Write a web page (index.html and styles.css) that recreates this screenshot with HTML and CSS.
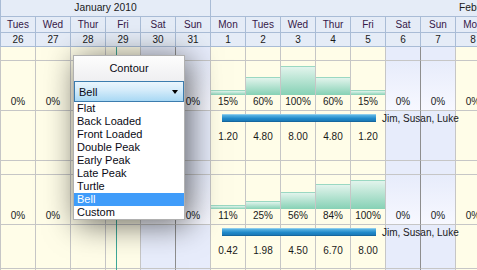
FILE: index.html
```html
<!DOCTYPE html>
<html lang="en">
<head>
<meta charset="UTF-8">
<title>Resource Schedule</title>
<link rel="stylesheet" href="styles.css">
</head>
<body>

<div class="sched">
    <div class="months">
        <div class="month jan">January 2010</div>
        <div class="month feb">February 2010</div>
    </div>
    <div class="row days" id="days"></div>
    <div class="row dates" id="dates"></div>
    <div id="groups">
        <!-- resource rows go here -->
    </div>

    <div class="today-line"></div>

    <div class="contour">
        <div class="contour-title">Contour</div>
        <div class="contour-select"><span>Bell</span><i class="arrow"></i></div>
        <ul class="contour-list" id="contour-list"></ul>
    </div>
</div>

<script>
    const columns = [
        ["Tues", 26], ["Wed", 27], ["Thur", 28], ["Fri", 29], ["Sat", 30], ["Sun", 31],
        ["Mon", 1], ["Tues", 2], ["Wed", 3], ["Thur", 4], ["Fri", 5], ["Sat", 6], ["Sun", 7], ["Mon", 8]
    ];

    const groups = [
        {
            pct: [0, 0, 0, 0, 0, 0, 15, 60, 100, 60, 15, 0, 0, 0],
            vals: ["", "", "", "", "", "", "1.20", "4.80", "8.00", "4.80", "1.20", "", "", ""],
            last: false
        },
        {
            pct: [0, 0, 0, 0, 0, 0, 11, 25, 56, 84, 100, 0, 0, 0],
            vals: ["", "", "", "", "", "", "0.42", "1.98", "4.50", "6.70", "8.00", "", "", ""],
            last: true
        }
    ];

    const contours = ["Flat", "Back Loaded", "Front Loaded", "Double Peak", "Early Peak", "Late Peak", "Turtle", "Bell", "Custom"];

    // columns hidden under the popup
    const covered = [2, 3, 4];

    // weekend class for a column
    function dayClass(name) {
        if (name === "Sat") return " sat";
        if (name === "Sun") return " sun";
        return "";
    }

    // header rows
    const daysRow = document.getElementById("days");
    const datesRow = document.getElementById("dates");
    columns.forEach(([name, date]) => {
        daysRow.insertAdjacentHTML("beforeend", `<div class="hcell">${name}</div>`);
        datesRow.insertAdjacentHTML("beforeend", `<div class="hcell">${date}</div>`);
    });

    function makeRow(kind, cellFn) {
        const row = document.createElement("div");
        row.className = "row " + kind;
        columns.forEach(([name], i) => {
            const cell = document.createElement("div");
            cell.className = "cell" + dayClass(name);
            cell.innerHTML = cellFn ? cellFn(i) : "";
            row.appendChild(cell);
        });
        return row;
    }

    const groupsEl = document.getElementById("groups");
    groups.forEach((g) => {
        groupsEl.appendChild(makeRow("spacer"));

        groupsEl.appendChild(makeRow("chart", (i) => {
            const p = g.pct[i];
            const h = p > 0 ? Math.round(p * 0.28) + 1 : 0;
            const bar = h ? `<div class="bar" style="height:${h}px"></div>` : "";
            const label = covered.includes(i) ? "" : `${p}%`;
            return `<div class="plot">${bar}</div><div class="pct">${label}</div>`;
        }));

        const assign = makeRow("assign" + (g.last ? " short" : ""), (i) => `<div class="val">${g.vals[i]}</div>`);
        assign.insertAdjacentHTML("beforeend", `<div class="task"></div><div class="task-label">Jim, Susan, Luke</div>`);
        groupsEl.appendChild(assign);
    });
    groupsEl.appendChild(makeRow("spacer"));

    // contour dropdown
    const list = document.getElementById("contour-list");
    contours.forEach((c) => {
        const li = document.createElement("li");
        li.textContent = c;
        if (c === "Bell") li.classList.add("picked");
        list.appendChild(li);
    });
</script>

</body>
</html>
```

FILE: styles.css
```css
/* base */
body {
    margin: 0;
    overflow: hidden;
    font-family: "Liberation Sans", Arial, sans-serif;
    font-size: 10px;
    color: #1a1a1a;
    background: #fffde8;
}
.sched {
    position: relative;
    width: 491px;
    height: 270px;
    overflow: hidden;
}

/* header */
.months {
    display: flex;
    height: 17px;
    background: #e5ecf7;
    border-left: 1px solid #a9bcd6;
    border-bottom: 1px solid #a9bcd6;
    box-sizing: border-box;
}
.month {
    line-height: 16px;
    font-size: 10.3px;
    white-space: nowrap;
    overflow: hidden;
}
.jan {
    width: 210px;
    text-align: center;
    border-right: 1px solid #a9bcd6;
    box-sizing: border-box;
}
.feb {
    flex: 1;
    padding-left: 248px;
}

.row {
    display: grid;
    grid-template-columns: repeat(14, 35px);
    border-left: 1px solid #c6c6c6;
    position: relative;
}
.days, .dates {
    background: #e5ecf7;
    border-left-color: #a9bcd6;
}
.hcell {
    text-align: center;
    border-right: 1px solid #a9bcd6;
    border-bottom: 1px solid #a9bcd6;
}
.days .hcell {
    height: 16px;
    line-height: 15px;
    color: #361848;
    box-sizing: border-box;
}
.dates .hcell {
    height: 14px;
    line-height: 13px;
    box-sizing: border-box;
}

/* body grid */
.cell {
    box-sizing: border-box;
    border-right: 1px solid #c6c6c6;
    border-bottom: 1px solid #c6c6c6;
    background: #fffde8;
}
.cell.sat, .cell.sun {
    background: #e7ecfb;
}
.cell.sat {
    border-right-color: #8e8e8e;
}
.spacer .cell { height: 14px; }
.chart .cell { height: 50px; }
.assign .cell { height: 50px; }
.assign.short .cell { height: 44px; }

.chart .cell.sat, .chart .cell.sun {
    background: linear-gradient(to bottom, #e7ecfb, #f7f8ff);
}

/* histogram */
.plot {
    height: 34px;
    display: flex;
    align-items: flex-end;
}
.bar {
    width: 100%;
    box-sizing: border-box;
    border-top: 1px solid #9ad8c2;
    background: linear-gradient(to bottom, #e2f4ec, #86d1b5);
}
.pct, .val {
    text-align: center;
    line-height: 14px;
    height: 14px;
}
.val {
    padding-top: 19px;
}

/* assignment bar */
.task {
    position: absolute;
    left: 221px;
    top: 3px;
    width: 154px;
    height: 8px;
    box-sizing: border-box;
    border-top: 1px solid #8cccec;
    border-bottom: 1px solid #16679f;
    background: linear-gradient(to bottom, #5db6e4, #1f88c9 60%, #1b79b6);
}
.task-label {
    position: absolute;
    left: 381px;
    top: 2px;
    line-height: 12px;
    white-space: nowrap;
}

.today-line {
    position: absolute;
    left: 116px;
    top: 47px;
    bottom: 0;
    width: 1px;
    background: #3ea898;
}

/* contour popup */
.contour {
    position: absolute;
    left: 73px;
    top: 55px;
    width: 110px;
    background: #fff;
    border: 1px solid #b0b0b0;
    box-shadow: 4px 4px 30px rgba(0, 0, 0, 0.6);
    font-size: 11px;
    color: #0a0a14;
}
.contour-title {
    height: 25px;
    line-height: 25px;
    text-align: center;
    background: linear-gradient(to bottom, #fdfdfd, #efeff1);
}
.contour-select {
    height: 21px;
    box-sizing: border-box;
    border: 1px solid #3b7cae;
    padding: 0 5px 0 4px;
    display: flex;
    justify-content: space-between;
    align-items: center;
    background: linear-gradient(to bottom, #eaf6fd, #d3ebfa 45%, #a8d8f4);
}
.arrow {
    width: 0;
    height: 0;
    border-left: 3.5px solid transparent;
    border-right: 3.5px solid transparent;
    border-top: 4px solid #000;
}
.contour-list {
    list-style: none;
    margin: 0;
    padding: 0;
}
.contour-list li {
    height: 13px;
    line-height: 13px;
    padding-left: 3px;
}
.contour-list li.picked {
    background: #3f9cfa;
    color: #fff;
}
```
